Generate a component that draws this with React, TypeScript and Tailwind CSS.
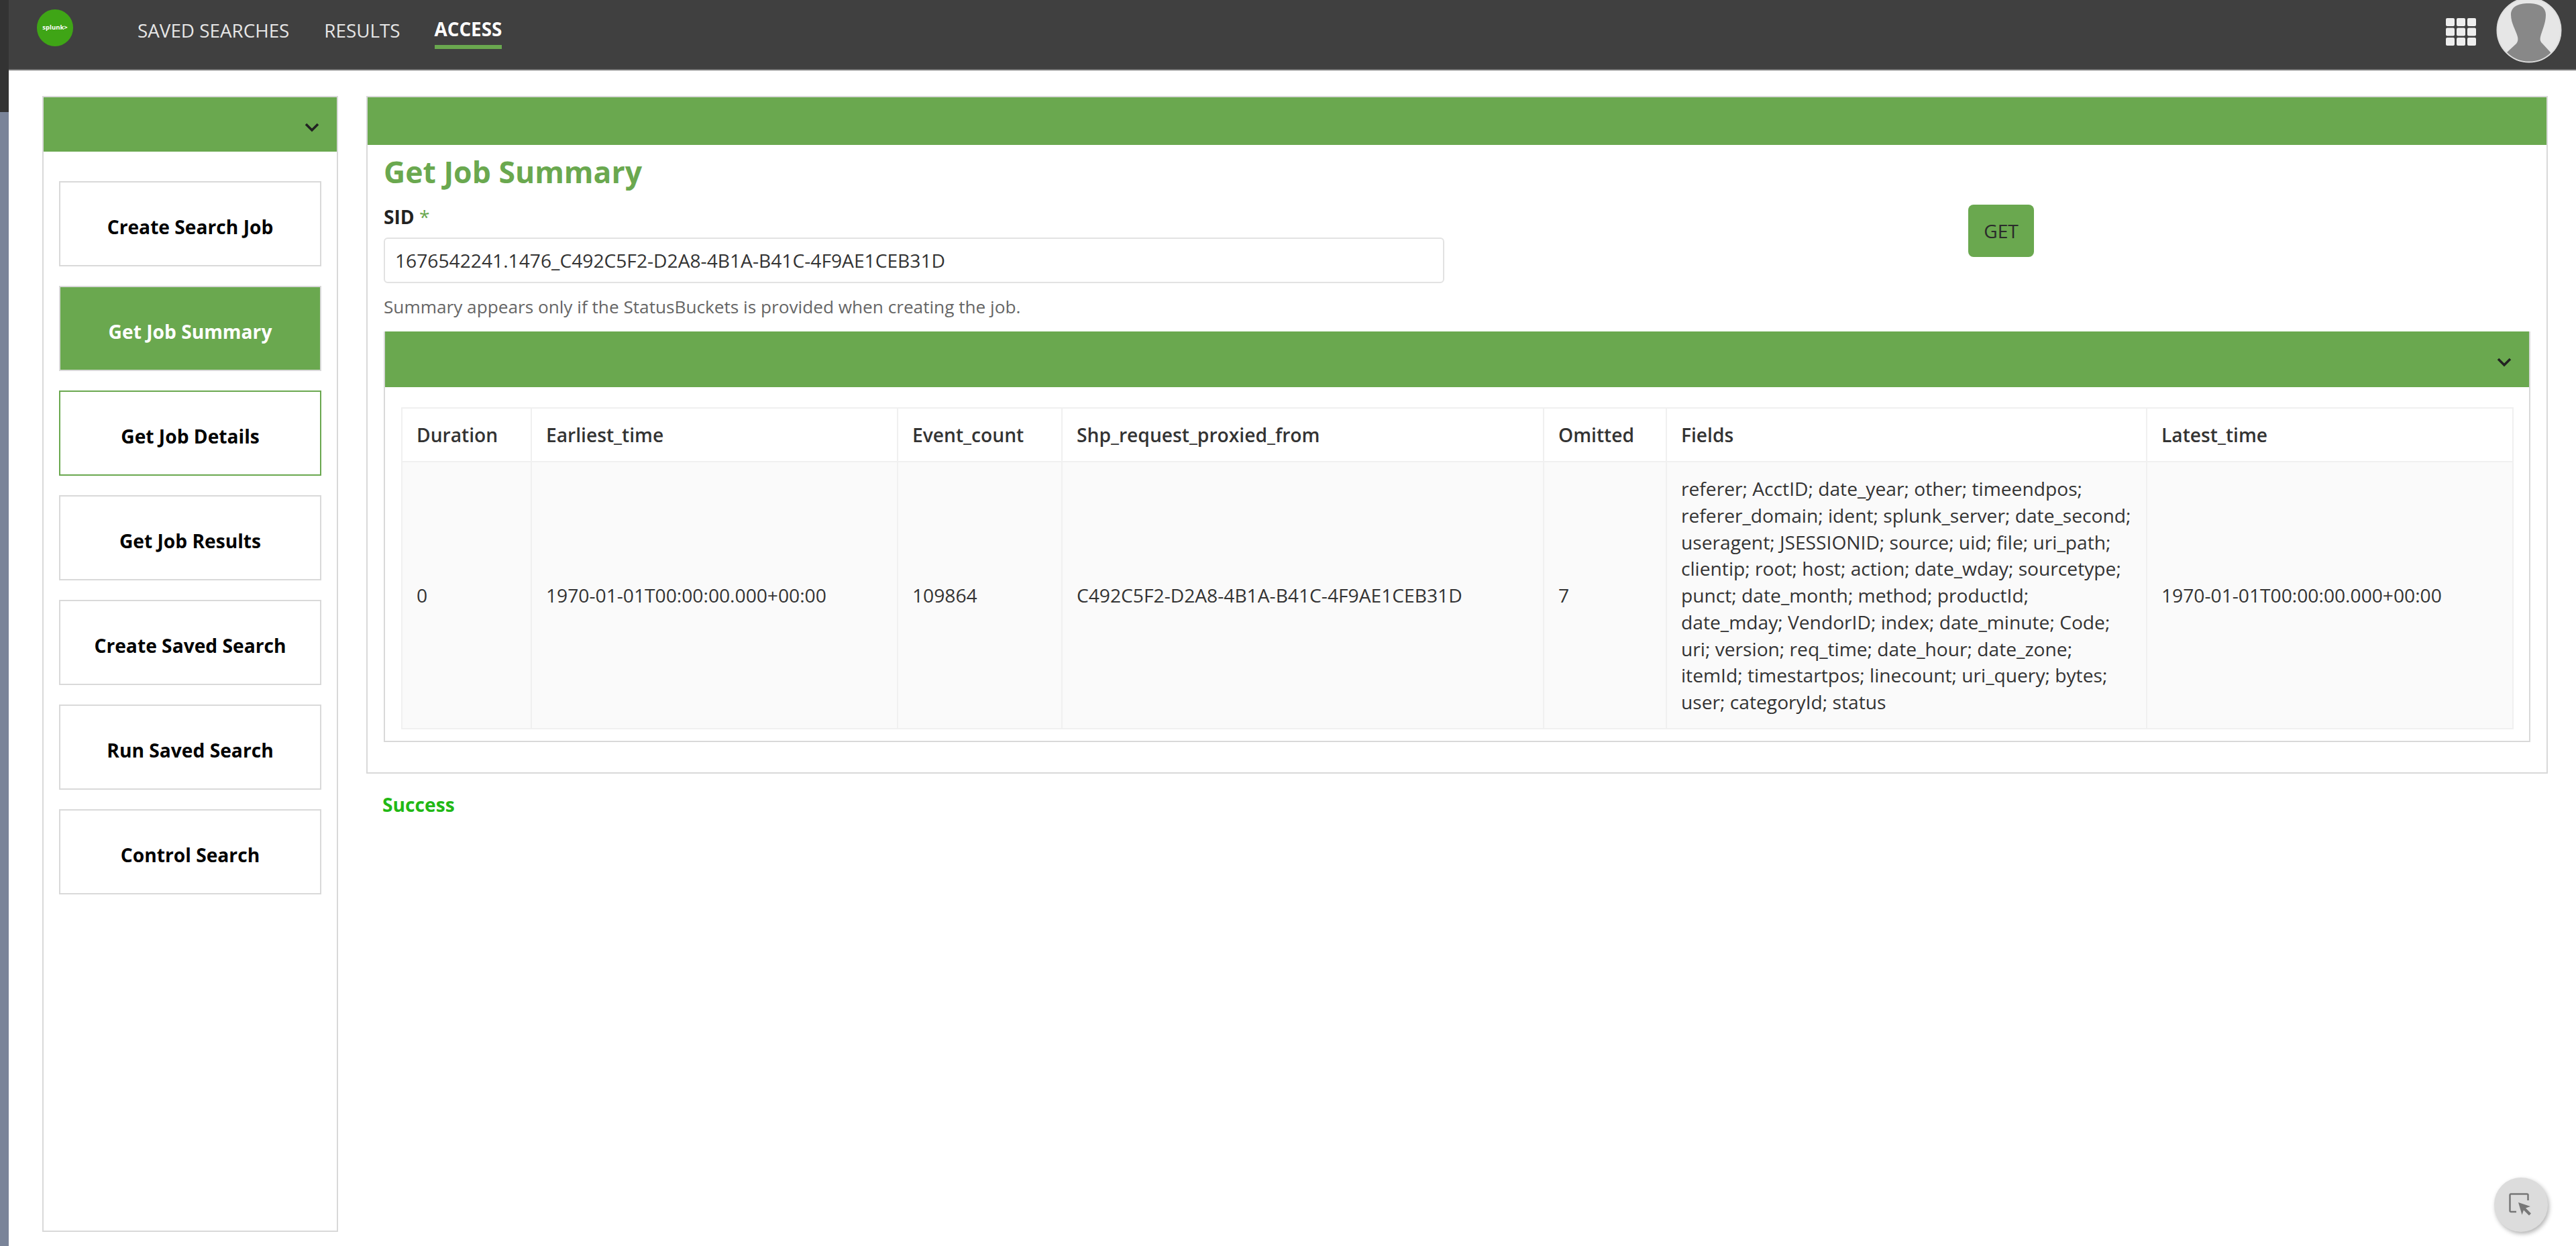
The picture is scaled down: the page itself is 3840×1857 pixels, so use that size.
import React from "react";

const menu = [
  { label: "Create Search Job", state: "idle" },
  { label: "Get Job Summary", state: "active" },
  { label: "Get Job Details", state: "hover" },
  { label: "Get Job Results", state: "idle" },
  { label: "Create Saved Search", state: "idle" },
  { label: "Run Saved Search", state: "idle" },
  { label: "Control Search", state: "idle" },
];

const columns = [
  { name: "Duration", width: "w-[193px]" },
  { name: "Earliest_time", width: "w-[546px]" },
  { name: "Event_count", width: "w-[245px]" },
  { name: "Shp_request_proxied_from", width: "w-[718px]" },
  { name: "Omitted", width: "w-[183px]" },
  { name: "Fields", width: "w-[716px]" },
  { name: "Latest_time", width: "w-[546px]" },
];

const fields =
  "referer; AcctID; date_year; other; timeendpos; referer_domain; ident; splunk_server; date_second; useragent; JSESSIONID; source; uid; file; uri_path; clientip; root; host; action; date_wday; sourcetype; punct; date_month; method; productId; date_mday; VendorID; index; date_minute; Code; uri; version; req_time; date_hour; date_zone; itemId; timestartpos; linecount; uri_query; bytes; user; categoryId; status";

const cells = [
  "0",
  "1970-01-01T00:00:00.000+00:00",
  "109864",
  "C492C5F2-D2A8-4B1A-B41C-4F9AE1CEB31D",
  "7",
  fields,
  "1970-01-01T00:00:00.000+00:00",
];

function Chevron() {
  return (
    <svg width="24" height="15" viewBox="0 0 24 15" fill="none">
      <path d="M3 3l9 9 9-9" stroke="#222" strokeWidth="3.6" />
    </svg>
  );
}

function GridIcon() {
  const positions = [0, 16, 32];
  return (
    <svg width="45" height="41" viewBox="0 0 45 41" className="mr-[30px] mt-[27px] self-start">
      {positions.map((x) =>
        [0, 14.5, 29].map((y) => (
          <rect key={`${x}-${y}`} x={x} y={y} width="13" height="12" rx="2" fill="#eeeeee" />
        )),
      )}
    </svg>
  );
}

function Avatar() {
  return (
    <svg width="98" height="98" viewBox="0 0 98 98" className="self-start -mt-[4px] mr-[21px]">
      <defs>
        <clipPath id="avatar-clip">
          <circle cx="49" cy="49" r="47.5" />
        </clipPath>
      </defs>
      <circle cx="49" cy="49" r="48" fill="#e6e6e6" />
      <path
        clipPath="url(#avatar-clip)"
        d="M48 9c15 0 26 5 26 17 0 13-6 24-8 33-1 5 0 7 3 10l12 13v16H16V82l13-12c3-3 4-6 3-11-2-9-10-20-10-33C22 14 33 9 48 9z"
        fill="#888888"
      />
      <circle cx="49" cy="49" r="47.5" fill="none" stroke="#dddddd" strokeWidth="2" />
    </svg>
  );
}

export default function App() {
  return (
    <div className="flex h-screen w-full overflow-hidden bg-white font-['Open_Sans',sans-serif] text-[28.2px] text-[#333]">
      <div className="flex w-[13px] shrink-0 flex-col">
        <div className="h-[167px] bg-[#333333]" />
        <div className="flex-1 bg-[#7a8499]" />
      </div>

      <div className="flex min-w-0 flex-1 flex-col">
        <header className="flex h-[105px] shrink-0 items-start border-b-2 border-[#777] bg-[#404040]">
          <div className="ml-[42px] mt-[14px] flex h-[55px] w-[54px] items-center justify-center rounded-full bg-[#3fa516] text-[9.500px] font-bold text-white">
            splunk&gt;
          </div>
          <nav className="ml-[96px] mt-[25px] flex flex-1 items-start text-[27.800px] leading-[40px] text-[#e6e6e6]">
            <a>SAVED SEARCHES</a>
            <a className="ml-[52px]">RESULTS</a>
            <a className="ml-[51px] -mt-[2px] flex h-[50px] flex-col border-b-[6px] border-[#6aa84f] font-bold text-white">
              ACCESS
            </a>
          </nav>
          <GridIcon />
          <Avatar />
        </header>

        <main className="flex min-h-0 flex-1 gap-[42px] pb-[21px] pl-[50px] pr-[42px] pt-[38px]">
          <aside className="flex w-[441px] shrink-0 flex-col border-2 border-[#d9d9d9]">
            <div className="flex h-[81px] items-center justify-end bg-[#6aa84f] pr-[25px] pt-[7px]">
              <Chevron />
            </div>
            <div className="flex flex-col gap-[29px] px-[23px] pt-[44px]">
              {menu.map((item) => (
                <button
                  key={item.label}
                  className={
                    item.state === "active"
                      ? "flex h-[127px] items-center justify-center border-2 border-[#d9d9d9] bg-[#6aa84f] pt-[10px] font-bold text-white"
                      : item.state === "hover"
                        ? "flex h-[127px] items-center justify-center border-2 border-[#6aa84f] bg-white pt-[10px] font-bold text-black"
                        : "flex h-[127px] items-center justify-center border-2 border-[#d9d9d9] bg-white pt-[10px] font-bold text-black"
                  }
                >
                  {item.label}
                </button>
              ))}
            </div>
          </aside>

          <section className="flex min-w-0 flex-1 flex-col">
            <div className="h-[1010px] border-2 border-[#d9d9d9]">
              <div className="h-[71px] bg-[#6aa84f]" />
              <div className="px-[24px]">
                <h2 className="mt-[11px] text-[44.500px] font-bold leading-[58px] text-[#6aa84f]">Get Job Summary</h2>
                <div className="flex items-start">
                  <div className="w-[1581px]">
                    <label className="mt-[20px] block font-bold leading-[36px] text-[#222]">
                      SID <span className="font-normal text-[#6aa84f]">*</span>
                    </label>
                    <div className="mt-[13px] flex h-[68px] items-center rounded-[6px] border-2 border-[#e2e2e2] pl-[15px] text-[#333]">
                      1676542241.1476_C492C5F2-D2A8-4B1A-B41C-4F9AE1CEB31D
                    </div>
                    <p className="mt-[19px] text-[26.200px] leading-[32px] text-[#666]">
                      Summary appears only if the StatusBuckets is provided when creating the job.
                    </p>
                  </div>
                  <button className="ml-[781px] mt-[20px] h-[78px] w-[98px] rounded-[8px] bg-[#6aa84f] font-medium text-[#2b2b2b]">
                    GET
                  </button>
                </div>
                <div className="mt-[21px] border-x-2 border-b-2 border-[#d9d9d9]">
                  <div className="flex h-[83px] items-center justify-end bg-[#6aa84f] pr-[25px] pt-[7px]">
                    <Chevron />
                  </div>
                  <div className="pb-[17px] pl-[24px] pr-[24px] pt-[30px]">
                    <table className="w-full table-fixed border-collapse border-2 border-[#f0f0f0]">
                      <thead>
                        <tr className="h-[80px] bg-white">
                          {columns.map((c) => (
                            <th
                              key={c.name}
                              className={`${c.width} border-2 border-[#f0f0f0] px-[21px] text-left font-semibold text-[#333]`}
                            >
                              {c.name}
                            </th>
                          ))}
                        </tr>
                      </thead>
                      <tbody>
                        <tr className="h-[398px] bg-[#fafafa]">
                          {cells.map((cell, i) => (
                            <td key={i} className="border-2 border-[#f0f0f0] px-[21px] pt-[2px] leading-[39.7px]">
                              {cell}
                            </td>
                          ))}
                        </tr>
                      </tbody>
                    </table>
                  </div>
                </div>
              </div>
            </div>
            <div className="ml-[24px] mt-[28px] font-bold leading-[36px] text-[#22b815]">Success</div>
          </section>
        </main>
      </div>

      <button className="absolute left-[3718px] top-[1755px] flex h-[81px] w-[80px] items-center justify-center rounded-full bg-[#dcdcdc] shadow-[2px_3px_6px_rgba(0,0,0,0.3)]">
        <svg width="36" height="36" viewBox="0 0 36 36" fill="none">
          <path d="M11 28H3a1.5 1.5 0 0 1-1.500-1.500V3A1.500 1.500 0 0 1 3 1.500h24A1.500 1.500 0 0 1 28.500 3v8" stroke="#777" strokeWidth="2.500" />
          <path d="M14 14l18 6-7 2.500 8 8-3 3-8-8-2.500 7z" fill="#777" />
        </svg>
      </button>
    </div>
  );
}
